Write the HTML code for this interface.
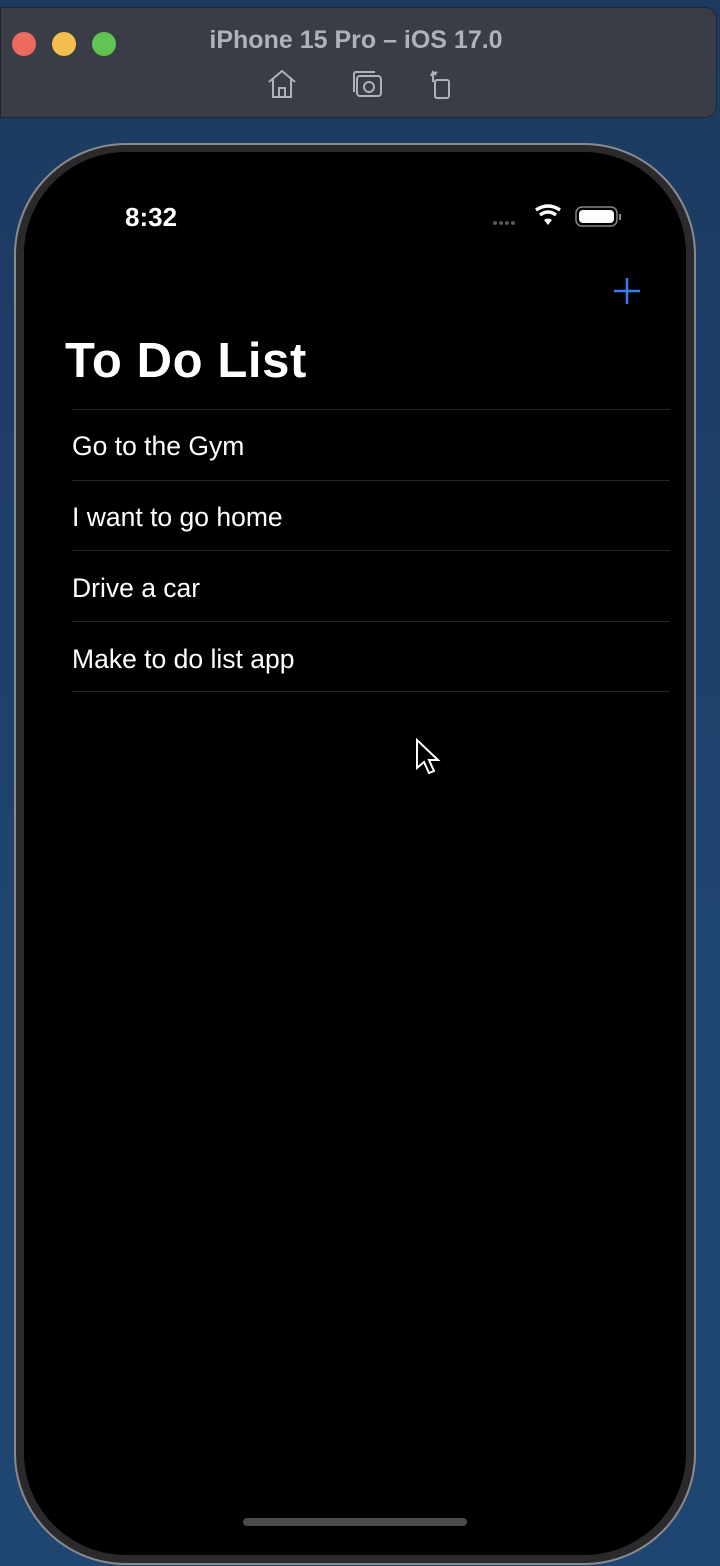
<!DOCTYPE html>
<html><head><style>
html,body{margin:0;padding:0;width:720px;height:1566px;overflow:hidden;background:#1d3d64;font-family:"Liberation Sans",sans-serif;}
.bg{position:absolute;left:0;top:0;width:720px;height:1566px;background:linear-gradient(180deg,#1c3a60 0%,#1e4470 60%,#1f4670 100%);}
.tb{position:absolute;left:0;top:7px;width:717px;height:111px;background:#393d45;border-radius:0 12px 12px 0;border:1px solid #23262c;box-sizing:border-box;}
.dot{position:absolute;top:24px;width:24px;height:24px;border-radius:50%;}
.title{position:absolute;left:0;width:710px;top:18px;text-align:center;color:#aeb2ba;font-weight:bold;font-size:25px;}
.phone{position:absolute;left:14px;top:143px;width:682px;height:1422px;border-radius:112px;background:#2a2a2c;border:2px solid #8a8a8e;box-sizing:border-box;}
.screen{position:absolute;left:24px;top:152px;width:662px;height:1403px;border-radius:102px;background:#000;overflow:hidden;}
.t{position:absolute;color:#fff;}
.sep{position:absolute;left:48px;width:598px;height:1px;background:#262628;}
.row{position:absolute;left:48px;font-size:26.5px;color:#fff;}
</style></head><body>
<div class="bg"></div>
<div class="tb">
<div class="dot" style="left:11px;background:#ec6a5e"></div>
<div class="dot" style="left:51px;background:#f4bf4f"></div>
<div class="dot" style="left:91px;background:#61c554"></div>
<div class="title">iPhone 15 Pro – iOS 17.0</div>
<svg style="position:absolute;left:264px;top:60px" width="200" height="36" viewBox="0 0 200 36" fill="none" stroke="#aeb2ba" stroke-width="2">
<path d="M4 14 L17 3 L30 14 M8 11 V29 H26 V11 M14 29 V20 H20 V29"/>
<rect x="92" y="8" width="24" height="20" rx="3"/><path d="M89 24 V6 Q89 4 91 4 H110"/><circle cx="104" cy="19" r="5"/>
<rect x="170" y="12" width="14" height="18" rx="2"/><path d="M168 14 V6 L172 4 M166 8 L168 4 L171 7"/>
</svg>
</div>
<div class="phone"></div>
<div class="screen">
<div class="t" style="left:101px;top:50px;font-size:26px;font-weight:bold;">8:32</div>
<svg style="position:absolute;left:466px;top:52px" width="140" height="26" viewBox="0 0 140 26">
<g fill="#555"><circle cx="5" cy="19" r="2"/><circle cx="11" cy="19" r="2"/><circle cx="17" cy="19" r="2"/><circle cx="23" cy="19" r="2"/></g>
<path d="M46 6 Q58 -2 70 6" stroke="#fff" stroke-width="3.5" fill="none"/>
<path d="M50 11 Q58 5 66 11" stroke="#fff" stroke-width="3.5" fill="none"/>
<path d="M54 16 L58 21 L62 16 Q58 13 54 16Z" fill="#fff"/>
<rect x="86" y="3" width="41" height="19" rx="6" fill="none" stroke="#888" stroke-width="1.5"/>
<rect x="89" y="6" width="35" height="13" rx="4" fill="#fff"/>
<rect x="129" y="10" width="2" height="6" fill="#888"/>
</svg>
<svg style="position:absolute;left:588px;top:124px" width="30" height="30" viewBox="0 0 30 30"><path d="M15 2 V28 M2 15 H28" stroke="#3b7cf2" stroke-width="2.5"/></svg>
<div class="t" style="left:41px;top:181px;font-size:49px;font-weight:bold;letter-spacing:0.6px;">To Do List</div>
<div class="sep" style="top:257px"></div>
<div class="row" style="top:279px">Go to the Gym</div>
<div class="sep" style="top:328px"></div>
<div class="row" style="top:350px">I want to go home</div>
<div class="sep" style="top:398px"></div>
<div class="row" style="top:421px">Drive a car</div>
<div class="sep" style="top:469px"></div>
<div class="row" style="top:492px">Make to do list app</div>
<div class="sep" style="top:539px"></div>
<div style="position:absolute;left:219px;top:1366px;width:224px;height:8px;border-radius:4px;background:#4a4a4c;"></div>
</div>
<svg style="position:absolute;left:415px;top:738px" width="26" height="38" viewBox="0 0 26 38"><path d="M2 2 V30 L9 24 L14 35 L19 33 L14 22 L23 22 Z" fill="#000" stroke="#fff" stroke-width="2"/></svg>
</body></html>
